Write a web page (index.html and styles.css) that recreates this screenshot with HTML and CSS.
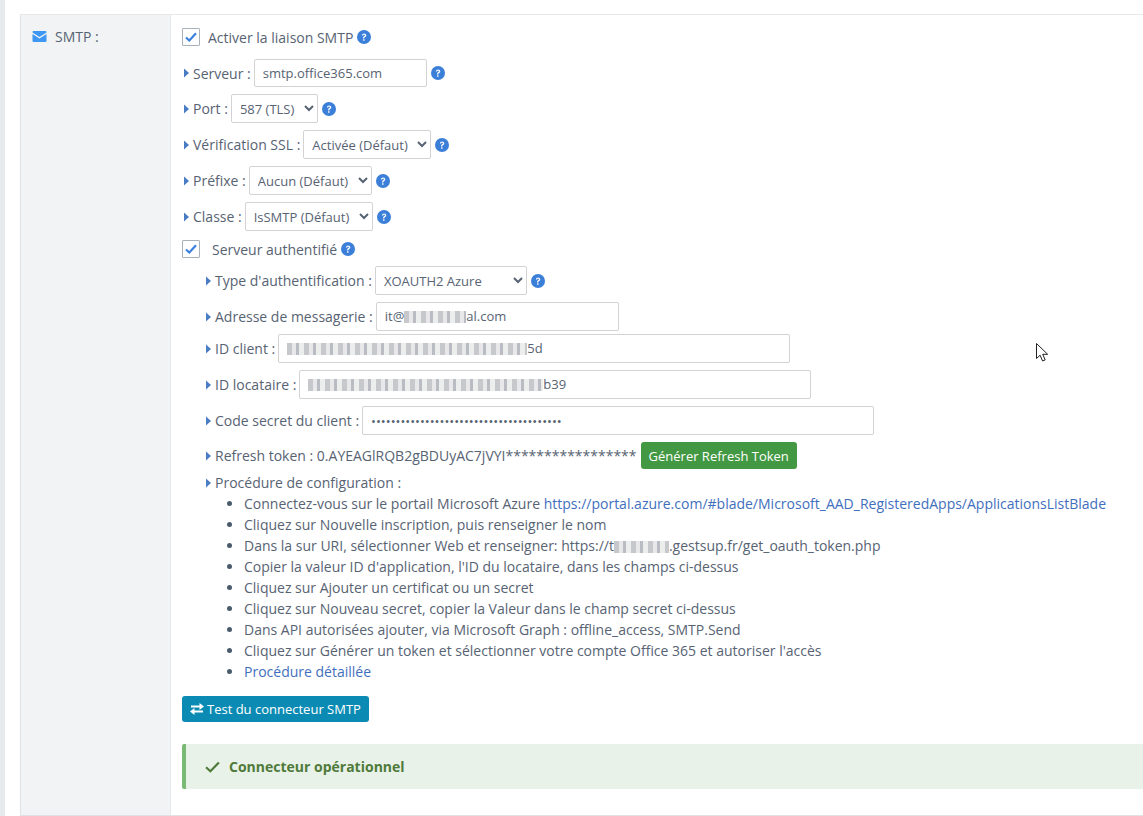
FILE: index.html
```html
<!doctype html>
<html lang="fr">
  <head>
    <meta charset="UTF-8" />
    <title>Paramètres SMTP</title>
    <link rel="stylesheet" href="styles.css">
  </head>
  <body>
    <svg class="sprites" width="0" height="0">
      <symbol id="caret" viewBox="0 0 5 10"><path d="M0 .6 5 5 0 9.4z"/></symbol>
      <symbol id="help" viewBox="0 0 14 14"><circle cx="7" cy="7" r="7"/><path d="M4.9 5.4c.1-1.300 1-2 2.200-2 1.300 0 2.200.8 2.200 1.900 0 1-.6 1.400-1.200 1.800-.5.3-.7.5-.7 1v.3H6.100v-.5c0-.9.400-1.300 1-1.700.5-.3.800-.5.800-1 0-.4-.3-.7-.8-.7s-.8.3-.9.900zM6.100 9.300h1.400v1.400H6.100z" fill="#fff"/></symbol>
    </svg>

    <div class="container">
      <div class="section">
        <div class="section-label">
          <svg class="mail-icon" viewBox="0 0 14 11"><path d="M1.300 0h11.400c.7 0 1.300.5 1.300 1.200v.2L7 6 0 1.400v-.2C0 .5.600 0 1.300 0z"/><path d="M0 3v6.700C0 10.400.600 11 1.300 11h11.400c.7 0 1.300-.6 1.300-1.300V3L7 7.600z"/></svg>
          <span>SMTP :</span>
        </div>
        <div class="section-body">
          <div class="check-row first">
            <span class="check"><svg viewBox="0 0 12 10"><path d="M1 5.500 4.300 8.500 11 1.200"/></svg></span>
            <span>Activer la liaison SMTP</span>
            <svg class="help"><use href="#help"/></svg>
          </div>

          <div class="row">
            <svg class="caret"><use href="#caret"/></svg>
            <span class="label">Serveur :</span>
            <input class="field w-server" type="text" value="smtp.office365.com" />
            <svg class="help wide"><use href="#help"/></svg>
          </div>
          <div class="row">
            <svg class="caret"><use href="#caret"/></svg>
            <span class="label">Port :</span>
            <select class="field w-port"><option>587 (TLS)</option></select>
            <svg class="help wide"><use href="#help"/></svg>
          </div>
          <div class="row">
            <svg class="caret"><use href="#caret"/></svg>
            <span class="label">Vérification SSL :</span>
            <select class="field w-ssl"><option>Activée (Défaut)</option></select>
            <svg class="help"><use href="#help"/></svg>
          </div>
          <div class="row">
            <svg class="caret"><use href="#caret"/></svg>
            <span class="label">Préfixe :</span>
            <select class="field w-prefix"><option>Aucun (Défaut)</option></select>
            <svg class="help"><use href="#help"/></svg>
          </div>
          <div class="row">
            <svg class="caret"><use href="#caret"/></svg>
            <span class="label">Classe :</span>
            <select class="field w-class"><option>IsSMTP (Défaut)</option></select>
            <svg class="help"><use href="#help"/></svg>
          </div>

          <div class="check-row second">
            <span class="check"><svg viewBox="0 0 12 10"><path d="M1 5.500 4.300 8.500 11 1.200"/></svg></span>
            <span class="check-text">Serveur authentifié</span>
            <svg class="help"><use href="#help"/></svg>
          </div>

          <div class="auth">
            <div class="row">
              <svg class="caret"><use href="#caret"/></svg>
              <span class="label">Type d'authentification :</span>
              <select class="field w-type"><option>XOAUTH2 Azure</option></select>
              <svg class="help"><use href="#help"/></svg>
            </div>
            <div class="row tight">
              <svg class="caret"><use href="#caret"/></svg>
              <span class="label">Adresse de messagerie :</span>
              <div class="field w-mail">it@<span class="mosaic m-mail"></span>al.com</div>
            </div>
            <div class="row">
              <svg class="caret"><use href="#caret"/></svg>
              <span class="label">ID client :</span>
              <div class="field w-long"><span class="mosaic m-client"></span>5d</div>
            </div>
            <div class="row">
              <svg class="caret"><use href="#caret"/></svg>
              <span class="label">ID locataire :</span>
              <div class="field w-long"><span class="mosaic m-tenant"></span>b39</div>
            </div>
            <div class="row">
              <svg class="caret"><use href="#caret"/></svg>
              <span class="label">Code secret du client :</span>
              <input class="field w-long" type="password" value="passwordpasswordpasswordpasswordpasswor" />
            </div>
            <div class="row tight">
              <svg class="caret"><use href="#caret"/></svg>
              <span class="label">Refresh token : 0.AYEAGlRQB2gBDUyAC7jVYI*****************</span>
              <button class="btn btn-green">Générer Refresh Token</button>
            </div>
            <div class="row text-row">
              <svg class="caret"><use href="#caret"/></svg>
              <span class="label">Procédure de configuration :</span>
            </div>
            <ul class="steps">
              <li>Connectez-vous sur le portail Microsoft Azure <a href="#">https://portal.azure.com/#blade/Microsoft_AAD_RegisteredApps/ApplicationsListBlade</a></li>
              <li>Cliquez sur Nouvelle inscription, puis renseigner le nom</li>
              <li>Dans la sur URI, sélectionner Web et renseigner: https://t<span class="mosaic m-host"></span>.gestsup.fr/get_oauth_token.php</li>
              <li>Copier la valeur ID d'application, l'ID du locataire, dans les champs ci-dessus</li>
              <li>Cliquez sur Ajouter un certificat ou un secret</li>
              <li>Cliquez sur Nouveau secret, copier la Valeur dans le champ secret ci-dessus</li>
              <li>Dans API autorisées ajouter, via Microsoft Graph : offline_access, SMTP.Send</li>
              <li>Cliquez sur Générer un token et sélectionner votre compte Office 365 et autoriser l'accès</li>
              <li><a href="#">Procédure détaillée</a></li>
            </ul>
          </div>

          <button class="btn btn-blue">
            <svg class="swap" viewBox="0 0 14 12"><path d="M9.500 0 14 3.500 9.500 7V4.600H1V2.400h8.500zM4.500 5 0 8.500 4.500 12V9.600H13V7.400H4.500z"/></svg>
            Test du connecteur SMTP
          </button>

          <div class="alert">
            <svg class="tick" viewBox="0 0 14 11"><path d="M1 5.800 5 9.500 13 1.200"/></svg>
            <strong>Connecteur opérationnel</strong>
          </div>
        </div>
      </div>
    </div>

    <!-- mouse pointer caught in the capture -->
    <svg class="pointer" viewBox="0 0 13 19"><path d="M.5.500v15l3.600-3.300 2.500 5.800 2.600-1.100-2.500-5.600h5z"/></svg>
  </body>
</html>
```

FILE: styles.css
```css
* {
  box-sizing: border-box;
}

body {
  margin: 0;
  height: 816px;
  overflow: hidden;
  background: #fff;
  color: #576373;
  font-family: "Open Sans", sans-serif;
  font-size: 14px;
  line-height: 21px;
  border-left: 5px solid #e7eaec;
  position: relative;
}

.sprites {
  position: absolute;
}

.container {
  padding: 14px 0 0 15px;
}

.section {
  display: flex;
  height: 802px;
  border-top: 1px solid #e6e8ea;
  border-bottom: 1px solid #dfe2e4;
  border-left: 1px solid #e0e3e5;
}

.section-label {
  width: 150px;
  flex: none;
  padding: 11px 0 0 11px;
  background: #f1f3f5;
  border-right: 1px solid #e6e8ea;
  display: flex;
  align-items: flex-start;
  gap: 8px;
}

.mail-icon {
  width: 15px;
  height: 11px;
  margin-top: 5px;
  fill: #3e97f2;
}

.section-body {
  flex: 1;
  padding: 0 0 0 11px;
  min-width: 0;
}

.check-row {
  display: flex;
  align-items: center;
  height: 18px;
}

.check-row.first {
  margin-top: 13px;
  margin-bottom: 13px;
}

.check-row.second {
  margin-top: 9px;
  margin-bottom: 8px;
}

.check {
  width: 18px;
  height: 18px;
  margin-right: 8px;
  border: 1px solid #a9b2bb;
  border-radius: 1px;
  display: flex;
  align-items: center;
  justify-content: center;
}

.check svg {
  width: 12px;
  height: 10px;
  fill: none;
  stroke: #3b82e0;
  stroke-width: 2.2;
}

.check-text {
  margin-left: 4px;
}

.help {
  width: 14px;
  height: 14px;
  margin-left: 4px;
  fill: #3b7fd9;
  flex: none;
}

.help.wide {
  margin-left: 4px;
}

.row {
  display: flex;
  align-items: center;
  margin-bottom: 7px;
  white-space: nowrap;
}

.row.tight {
  margin-bottom: 3px;
}

.row.text-row {
  margin-bottom: 0;
}

.caret {
  width: 5px;
  height: 10px;
  margin: 0 0 0 2px;
  fill: #4a7cc4;
  flex: none;
}

.label {
  margin-left: 4px;
  margin-right: 3px;
}

.field {
  height: 29px;
  padding: 0 8px;
  border: 1px solid #d3d3d3;
  border-radius: 2px;
  background: #fff;
  color: #576373;
  font: 13px/27px "Open Sans", sans-serif;
  outline: none;
  flex: none;
  display: block;
}

input.field {
  line-height: normal;
}

select.field {
  padding: 0 4px;
}

.w-server {
  width: 173px;
  height: 28px;
}

.w-port {
  width: 87px;
}

.w-ssl {
  width: 128px;
}

.w-prefix {
  width: 123px;
}

.w-class {
  width: 128px;
}

.w-type {
  width: 152px;
}

.w-mail {
  width: 243px;
}

.w-long {
  width: 512px;
}

.mosaic {
  display: inline-block;
  height: 12px;
  vertical-align: -2px;
  background-color: #dcdde0;
  background-image: repeating-linear-gradient(90deg, #c6c8cc 0 5px, #e8e8ea 5px 9px, #b9bcc2 9px 12px, #eceded 12px 17px);
  filter: blur(.6px);
}

.m-mail {
  width: 62px;
}

.m-client {
  width: 240px;
}

.m-tenant {
  width: 235px;
}

.m-host {
  width: 55px;
}

.auth {
  margin-left: 22px;
}

.btn {
  border: none;
  border-radius: 3px;
  color: #fff;
  font: 13px "Open Sans", sans-serif;
  cursor: pointer;
  flex: none;
}

.btn-green {
  height: 27px;
  margin-left: 1px;
  padding: 0 8px;
  background: #439843;
}

.btn-blue {
  height: 26px;
  display: flex;
  align-items: center;
  gap: 3px;
  margin-top: 14px;
  padding: 0 8px;
  background: #0b8bb3;
}

.swap {
  width: 14px;
  height: 12px;
  fill: #fff;
}

.steps {
  margin: 0;
  padding: 0 0 0 40px;
}

.steps li::marker {
  color: #4a5b6b;
}

.steps a {
  color: #3f6fbd;
  text-decoration: none;
}

.alert {
  display: flex;
  align-items: center;
  height: 45px;
  margin-top: 22px;
  padding-left: 19px;
  gap: 9px;
  background: #e8f2e8;
  border-left: 4px solid #79bb74;
  border-radius: 2px 0 0 2px;
  color: #4f7a3a;
}

.tick {
  width: 15px;
  height: 12px;
  fill: none;
  stroke: #4f7a3a;
  stroke-width: 2;
}

.pointer {
  position: absolute;
  left: 1031px;
  top: 343px;
  width: 13px;
  height: 19px;
  fill: #fff;
  stroke: #222;
  stroke-width: 1;
}
```
